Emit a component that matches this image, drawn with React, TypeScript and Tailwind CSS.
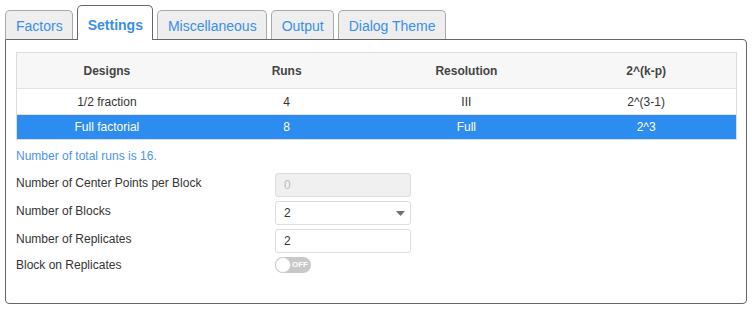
const tabs = ["Factors", "Settings", "Miscellaneous", "Output", "Dialog Theme"];

const designs = [
  { design: "1/2 fraction", runs: "4", resolution: "III", formula: "2^(3-1)", selected: false },
  { design: "Full factorial", runs: "8", resolution: "Full", formula: "2^3", selected: true },
];

function Tabs() {
  return (
    <div className="relative z-10 flex items-end gap-[4px] pl-[5px] pt-[5px] h-[40px]">
      {tabs.map((tab) =>
        tab === "Settings" ? (
          <div
            key={tab}
            className="h-[35px] rounded-t-[5px] border border-b-0 border-[#666] bg-white pl-[10px] pr-[9px] pt-[11px] text-[14px] font-bold leading-[16px] text-[#3a8ee6]"
          >
            {tab}
          </div>
        ) : (
          <div
            key={tab}
            className="mb-[1px] h-[29px] rounded-t-[5px] border border-b-0 border-[#a9a9a9] bg-[#eeeeee] pl-[10px] pr-[9px] pt-[7px] text-[14px] leading-[16px] text-[#3a8ee6]"
          >
            {tab}
          </div>
        )
      )}
    </div>
  );
}

function DesignTable() {
  return (
    <div className="w-[721px] border border-[#dddddd] text-[12px]">
      <div className="grid h-[36px] grid-cols-4 items-center border-b border-[#e3e3e3] bg-[#f7f7f7] text-center font-bold text-[#444]">
        <div>Designs</div>
        <div>Runs</div>
        <div>Resolution</div>
        <div>2^(k-p)</div>
      </div>
      {designs.map((row) => (
        <div
          key={row.design}
          className={
            row.selected
              ? "grid h-[24px] grid-cols-4 items-center bg-[#2d8cf0] text-center text-white"
              : "grid h-[26px] grid-cols-4 items-center border-b border-[#e3e3e3] bg-white text-center text-[#333]"
          }
        >
          <div>{row.design}</div>
          <div>{row.runs}</div>
          <div>{row.resolution}</div>
          <div>{row.formula}</div>
        </div>
      ))}
    </div>
  );
}

function Toggle() {
  return (
    <div className="relative flex h-[16px] w-[36px] items-center rounded-full bg-[#c8c8c8]">
      <div className="absolute left-0 top-0 h-[16px] w-[16px] rounded-full border border-[#d0d0d0] bg-white" />
      <span className="ml-[17px] text-[8px] font-bold leading-[10px] text-white">OFF</span>
    </div>
  );
}

export default function App() {
  return (
    <div className="h-[310px] w-[752px] bg-white font-['Liberation_Sans',Arial,sans-serif]">
      <Tabs />
      <div className="ml-[5px] -mt-[1px] h-[265px] w-[742px] rounded-[4px] rounded-tl-none border border-[#666] px-[10px] pt-[12px]">
        <DesignTable />

        <p className="mt-[8px] text-[12px] leading-[16px] text-[#4a94ec]">Number of total runs is 16.</p>

        <div className="mt-[9px] flex flex-col gap-[4px] text-[12px] text-[#333]">
          <div className="flex h-[24px]">
            <div className="w-[259px] pt-[2px] leading-[16px]">Number of Center Points per Block</div>
            <div className="flex h-[24px] w-[136px] items-center rounded-[3px] border border-[#dddddd] bg-[#f0f0f0] px-[8px] text-[#bbbbbb]">
              0
            </div>
          </div>
          <div className="flex h-[24px]">
            <div className="w-[259px] pt-[2px] leading-[16px]">Number of Blocks</div>
            <div className="flex h-[24px] w-[136px] items-center justify-between rounded-[3px] border border-[#dddddd] bg-white pl-[8px] pr-[5px]">
              <span>2</span>
              <svg width="9" height="5" viewBox="0 0 9 5">
                <path d="M0 0 L9 0 L4.5 5 Z" fill="#707070" />
              </svg>
            </div>
          </div>
          <div className="flex h-[24px]">
            <div className="w-[259px] pt-[2px] leading-[16px]">Number of Replicates</div>
            <div className="flex h-[24px] w-[136px] items-center rounded-[3px] border border-[#dddddd] bg-white px-[8px]">
              2
            </div>
          </div>
          <div className="flex h-[16px]">
            <div className="w-[259px] leading-[16px]">Block on Replicates</div>
            <Toggle />
          </div>
        </div>
      </div>
    </div>
  );
}
